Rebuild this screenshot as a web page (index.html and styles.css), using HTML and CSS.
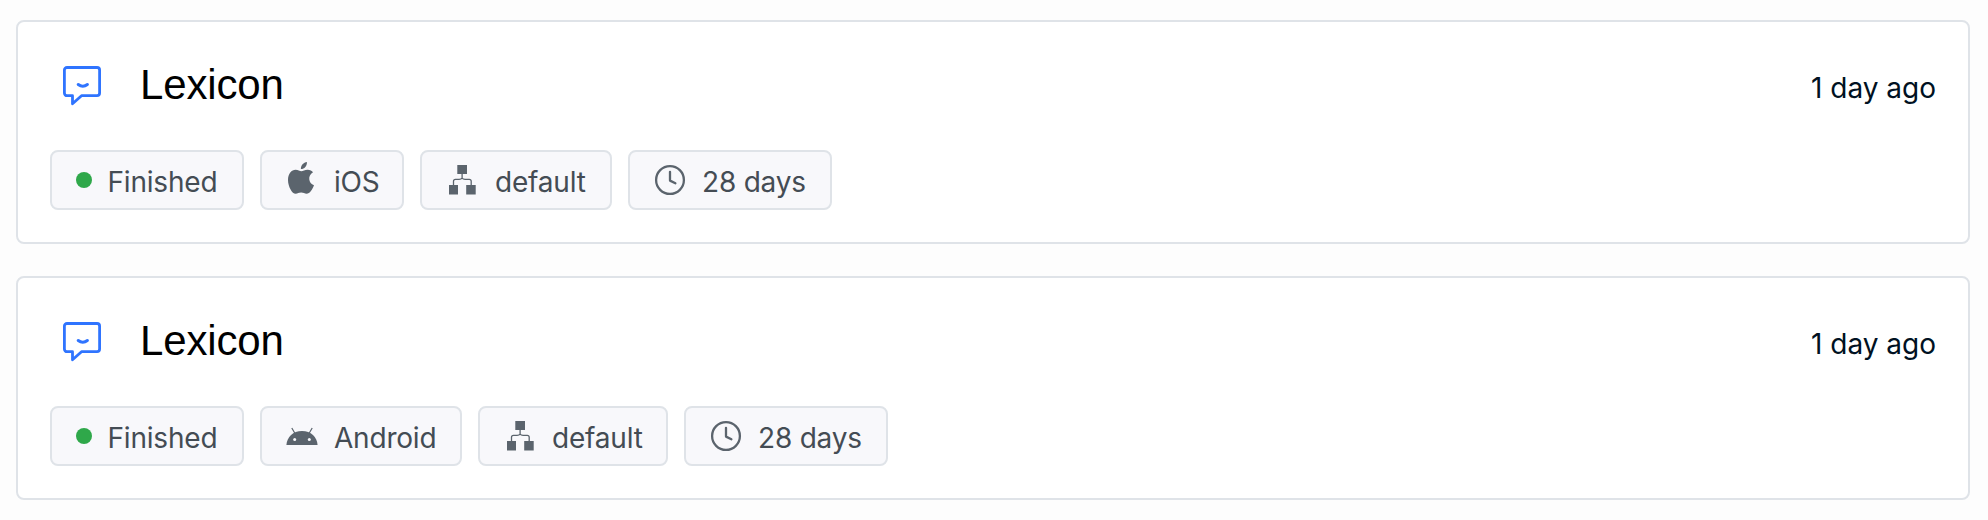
FILE: index.html
```html
<!DOCTYPE html>
<html lang="en">
<head>
<meta charset="utf-8">
<title>Lexicon</title>
<link rel="stylesheet" href="styles.css">
</head>
<body>
<svg class="sprite" aria-hidden="true">
  <symbol id="chat" viewBox="0 0 44 44"><g fill="none" stroke="#2f74ff" stroke-width="2.8" stroke-linecap="round" stroke-linejoin="round"><path d="M6 3.500h30a2.600 2.600 0 0 1 2.600 2.600v23a2.600 2.600 0 0 1-2.600 2.600H20.500l-9 8.100V31.700H6a2.600 2.600 0 0 1-2.600-2.600v-23A2.600 2.600 0 0 1 6 3.500z"/><path d="M17.200 20.500q4.600 3.600 9.200 0" stroke-width="3"/></g></symbol>
  <symbol id="apple" viewBox="0 0 32 36"><path d="M20.900 2c.3 4-2.600 7.200-6 7.100C14.700 5.500 17.600 2.300 20.900 2zM27 12.300c-5.700 3.300-4.500 11.100 1 13-1.500 4.200-4.200 8.400-7.400 8.500-2.200 0-2.900-1.200-5.500-1.200s-3.400 1.200-5.400 1.200C6 33.800 2 26.300 2 19.900c0-6.300 3.600-10.200 7.600-10.200 2.400 0 4.200 1.500 5.800 1.500 1.500 0 3.600-1.600 6.400-1.500 2.200.1 4.100 1 5.200 2.600z" fill="#5b646d"/></symbol>
  <symbol id="android" viewBox="0 0 32 32"><g fill="#5b646d"><path d="M.4 25C1 17 7 11 16 11s15 6 15.600 14z"/><path d="M5.800 8l3.500 6M26.200 8l-3.500 6" stroke="#5b646d" stroke-width="1.200"/></g><circle cx="8.700" cy="19.500" r="1.500" fill="#f8f8fb"/><circle cx="23.300" cy="19.500" r="1.500" fill="#f8f8fb"/></symbol>
  <symbol id="tree" viewBox="0 0 32 32"><path d="M11.300 1H21v9h-9.700zM3 21h9v9.500H3zM20.200 21h9.500v9.500h-9.500z" fill="#5b646d"/><path d="M16.100 10v4.300M7.500 21v-3.700q0-2 2-2h3.600q2.200 0 3-1.300q.8 1.300 3 1.300h4.100q2 0 2 2V21" fill="none" stroke="#5b646d" stroke-width="1.300"/></symbol>
  <symbol id="clock" viewBox="0 0 32 32"><g fill="none" stroke="#5b646d" stroke-width="2.300" stroke-linecap="round" stroke-linejoin="round"><circle cx="16" cy="16" r="13.900"/><path d="M16 7.800v8.800l5.400 2.700"/></g></symbol>
</svg>
<main class="list">
  <article class="card">
    <header class="head">
      <svg class="logo"><use href="#chat"/></svg>
      <h2 class="title">Lexicon</h2>
      <time class="date">1 day ago</time>
    </header>
    <div class="chips">
      <span class="chip finished"><i class="dot"></i><span>Finished</span></span>
      <span class="chip ios"><svg class="icon apple"><use href="#apple"/></svg><span>iOS</span></span>
      <span class="chip branch"><svg class="icon"><use href="#tree"/></svg><span>default</span></span>
      <span class="chip days"><svg class="icon"><use href="#clock"/></svg><span>28 days</span></span>
    </div>
  </article>
  <article class="card">
    <header class="head">
      <svg class="logo"><use href="#chat"/></svg>
      <h2 class="title">Lexicon</h2>
      <time class="date">1 day ago</time>
    </header>
    <div class="chips">
      <span class="chip finished"><i class="dot"></i><span>Finished</span></span>
      <span class="chip android"><svg class="icon"><use href="#android"/></svg><span>Android</span></span>
      <span class="chip branch compact"><svg class="icon"><use href="#tree"/></svg><span>default</span></span>
      <span class="chip days"><svg class="icon"><use href="#clock"/></svg><span>28 days</span></span>
    </div>
  </article>
</main>
</body>
</html>
```
FILE: styles.css
```css
* { box-sizing: border-box; }
body { margin: 0; background: #fdfdfd; font-family: Inter, sans-serif; }
.sprite { display: none; }
.list { display: flex; flex-direction: column; gap: 32px; padding: 20px 18px 20px 16px; }
.card { height: 224px; padding: 32px; background: #fff; border: 2px solid #dfe3e8; border-radius: 8px; }
.head { display: flex; align-items: center; height: 64px; }
.logo { width: 44px; height: 44px; margin-left: 11px; }
.title { margin: -2px 0 0 35px; font: 400 42px/48px "Liberation Sans", Arial, sans-serif; letter-spacing: -0.15px; color: #000; }
.date { margin: 4px 0 0 auto; font-size: 28px; line-height: 40px; color: #001122; }
.chips { display: flex; gap: 16px; margin-top: 32px; }
.chip { display: flex; align-items: center; height: 60px; padding: 4px 0 0 24px; background: #f8f8fb; border: 2px solid #dfe3e8; border-radius: 8px; font-size: 28px; line-height: 40px; letter-spacing: -0.2px; color: #444c54; white-space: nowrap; }
.finished { width: 194px; }
.ios { width: 144px; }
.android { width: 202px; }
.branch { width: 192px; }
.compact { width: 190px; }
.days { width: 204px; }
.dot { width: 16px; height: 16px; margin: 0 15.5px 4px 0; border-radius: 50%; background: #2fa84a; }
.icon { width: 32px; height: 32px; margin: 0 16px 4px 0; }
.branch .icon { margin-right: 17px; }
.compact .icon { margin-right: 16px; }
.apple { height: 36px; margin-bottom: 8px; }
```
